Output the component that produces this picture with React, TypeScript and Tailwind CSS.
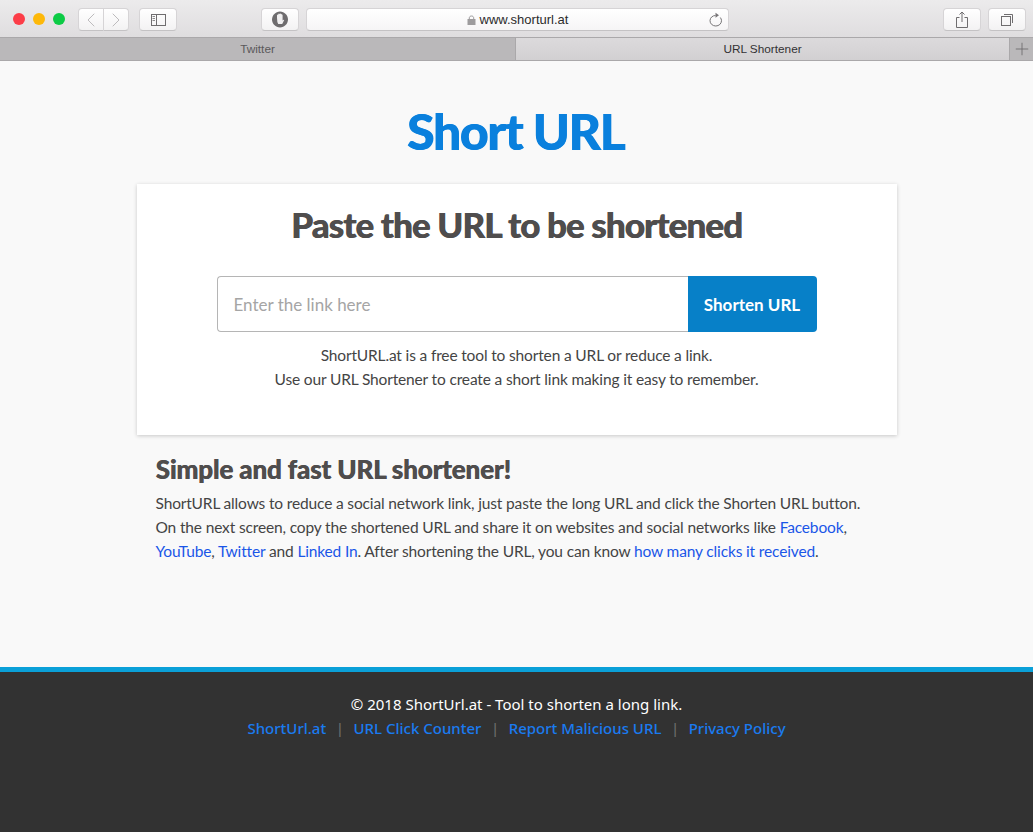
import { ChevronLeft, ChevronRight, Plus } from "lucide-react";

const linkClass = "text-[#1a56e8]";

const ToolbarButton = ({ className, children }: { className: string; children: React.ReactNode }) => (
  <div className={`flex h-[23px] items-center justify-center rounded-[4px] border border-[#d6d4d6] border-b-[#c4c2c4] bg-gradient-to-b from-[#ffffff] to-[#f3f2f3] ${className}`}>
    {children}
  </div>
);

const BrowserChrome = () => (
  <div className="font-['Liberation_Sans',sans-serif]">
    <div className="flex h-[37px] items-start bg-gradient-to-b from-[#ecebec] to-[#dfdddf] pt-[8px]">
      <div className="ml-[13px] mt-[5px] flex gap-[8px]">
        <div className="h-[12px] w-[12px] rounded-full bg-[#fc3d48]" />
        <div className="h-[12px] w-[12px] rounded-full bg-[#fdb809]" />
        <div className="h-[12px] w-[12px] rounded-full bg-[#0ccb45]" />
      </div>
      <div className="ml-[13px] flex">
        <ToolbarButton className="w-[26px] rounded-r-none">
          <ChevronLeft className="h-[24px] w-[24px] shrink-0 text-[#bdbbbd]" strokeWidth={1} />
        </ToolbarButton>
        <ToolbarButton className="w-[25px] rounded-l-none border-l-0">
          <ChevronRight className="h-[24px] w-[24px] shrink-0 text-[#bdbbbd]" strokeWidth={1} />
        </ToolbarButton>
      </div>
      <ToolbarButton className="ml-[10px] w-[38px]">
        <svg width="15" height="12" viewBox="0 0 15 12" fill="none" stroke="#6f6d6f">
          <rect x="0.5" y="0.5" width="14" height="11" />
          <path d="M5.5 0.5V11.5" />
          <path d="M1.5 2.5H4M1.5 4.5H4M1.5 6.5H4" strokeWidth="0.8" />
        </svg>
      </ToolbarButton>
      <ToolbarButton className="ml-[84px] w-[38px]">
        <svg width="16" height="17" viewBox="0 0 16 17">
          <path d="M8 0.5C12.4 0.5 16 4.2 16 8.5C16 12.8 12.4 16.5 8 16.5C3.6 16.5 0 12.8 0 8.5C0 4.2 3.6 0.5 8 0.5Z" fill="#6e6c6e" />
          <path d="M5 7V4.2Q5.6 3 6.2 4V3Q7 1.8 7.8 3Q8.8 2 9.4 3.2Q10.4 3 10.6 4.2V9.5Q11.6 8.4 12.2 9Q11.2 11 10.2 13H6.2Q5 11 5 7Z" fill="#f0eff0" />
        </svg>
      </ToolbarButton>
      <div className="relative ml-[7px] flex h-[23px] w-[423px] items-center justify-center rounded-[4px] border border-[#d6d4d6] border-b-[#c4c2c4] bg-gradient-to-b from-[#ffffff] to-[#f6f5f6]">
        <div className="flex items-center gap-[4px] text-[13px] text-[#2b2b2b]">
          <svg width="9" height="10" viewBox="0 0 9 10" fill="none">
            <rect x="0.5" y="4" width="8" height="6" fill="#9d9b9d" />
            <path d="M2.300 4V2.800C2.300 0.400 6.700 0.400 6.700 2.800V4" stroke="#9d9b9d" />
          </svg>
          <span>www.shorturl.at</span>
        </div>
        <svg className="absolute right-[5px] top-[3px]" width="14" height="15" viewBox="0 0 14 15" fill="none" stroke="#777577">
          <path d="M6.500 3.500C3.500 3.500 1 5.800 1 8.700C1 11.600 3.500 14 6.800 14C10 14 12.500 11.600 12.500 8.700C12.500 7.500 12 6.400 11.300 5.500" />
          <path d="M6.500 0.800L10 3.300L6.500 5.800Z" fill="#777577" stroke="none" />
        </svg>
      </div>
      <ToolbarButton className="ml-[214px] w-[38px]">
        <svg width="12" height="17" viewBox="0 0 12 17" fill="none" stroke="#6f6d6f">
          <path d="M3.500 6.500H0.500V16.500H11.500V6.500H8.500" />
          <path d="M6 11V1M3.500 3.500L6 1L8.500 3.500" />
        </svg>
      </ToolbarButton>
      <ToolbarButton className="ml-[7px] w-[38px]">
        <svg width="12" height="12" viewBox="0 0 12 12" fill="none" stroke="#6f6d6f">
          <rect x="0.500" y="2.500" width="9" height="9" />
          <path d="M3 0.500H11.500V9" />
        </svg>
      </ToolbarButton>
    </div>
    <div className="flex h-[24px] border-y border-[#aaa8aa] text-[11.800px] leading-[23px]">
      <div className="w-[515px] bg-[#bab8ba] text-center text-[#5a585a]">Twitter</div>
      <div className="flex-1 border-l border-[#aaa8aa] bg-gradient-to-b from-[#dcdadc] to-[#d2d0d2] text-center text-[#333133]">URL Shortener</div>
      <div className="flex w-[24px] items-center justify-center border-l border-[#aaa8aa] bg-[#bab8ba]">
        <Plus className="h-[20px] w-[20px] shrink-0 text-[#6a686a]" strokeWidth={1} />
      </div>
    </div>
  </div>
);

export default function App() {
  return (
    <div className="h-[832px] overflow-hidden bg-[#f9f9f9] font-['Lato',sans-serif]">
      <BrowserChrome />
      <main className="h-[606px]">
        <h1 className="pt-[38px] pr-[2px] text-center text-[50px] font-black leading-[64px] tracking-[-1.4px] text-[#0a80dd] [text-shadow:0.6px_0_0_#0a80dd]">
          Short URL
        </h1>
        <section className="mx-auto mt-[21px] h-[251px] w-[760px] bg-white pt-[18px] shadow-[0_1px_4px_rgba(0,0,0,0.2)]">
          <h2 className="text-center text-[35px] font-black leading-[44px] tracking-[-0.9px] text-[#4f4d4d] [text-shadow:0.6px_0_0_#4f4d4d]">
            Paste the URL to be shortened
          </h2>
          <div className="ml-[80px] mt-[30px] flex h-[56px] w-[600px]">
            <div className="flex w-[471px] items-center rounded-l-[4px] border border-r-0 border-[#b5b5b5] pl-[16px] pt-[1px] text-[17px] text-[#a5a5a5]">
              Enter the link here
            </div>
            <button className="w-[129px] rounded-r-[4px] bg-[#0780c8] pt-[1px] text-[17px] font-bold text-white">
              Shorten URL
            </button>
          </div>
          <p className="mt-[11px] text-center text-[15.500px] leading-[24px] tracking-[-0.15px] text-[#444444]">
            ShortURL.at is a free tool to shorten a URL or reduce a link.
            <br />
            Use our URL Shortener to create a short link making it easy to remember.
          </p>
        </section>
        <section className="mx-auto mt-[16px] w-[760px] px-[19px] text-[15.500px] leading-[24px] tracking-[-0.15px] text-[#444444]">
          <h3 className="text-[26px] font-black leading-[36px] tracking-[-0.15px] text-[#4f4d4d] [text-shadow:0.5px_0_0_#4f4d4d]">
            Simple and fast URL shortener!
          </h3>
          <p className="mt-[4px] w-[740px]">
            ShortURL allows to reduce a social network link, just paste the long URL and click the Shorten URL button.
            <br />
            On the next screen, copy the shortened URL and share it on websites and social networks like{" "}
            <a className={linkClass}>Facebook</a>,
            <br />
            <a className={linkClass}>YouTube</a>, <a className={linkClass}>Twitter</a> and{" "}
            <a className={linkClass}>Linked In</a>. After shortening the URL, you can know{" "}
            <a className={linkClass}>how many clicks it received</a>.
          </p>
        </section>
      </main>
      <footer className="h-[165px] border-t-[5px] border-[#0ba0d8] bg-[#323232] pt-[20px] text-center font-['Noto_Sans',sans-serif] text-[15px] leading-[24px] text-white">
        <p>© 2018 ShortUrl.at - Tool to shorten a long link.</p>
        <div className="flex justify-center gap-[9.500px] font-medium text-[#6b6b6b]">
          <a className="text-[#1a7bf0]">ShortUrl.at</a>
          <span>|</span>
          <a className="text-[#1a7bf0]">URL Click Counter</a>
          <span>|</span>
          <a className="text-[#1a7bf0]">Report Malicious URL</a>
          <span>|</span>
          <a className="text-[#1a7bf0]">Privacy Policy</a>
        </div>
      </footer>
    </div>
  );
}
